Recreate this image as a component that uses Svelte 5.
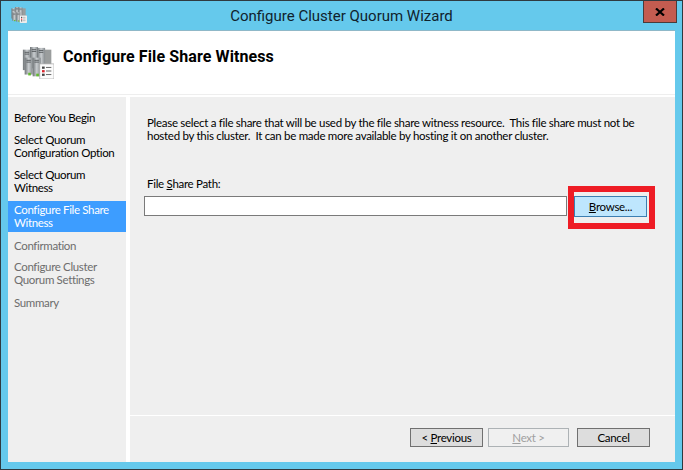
<script>
  const done = [
    { text: 'Before You Begin', cls: 'one' },
    { text: 'Select Quorum Configuration Option', cls: 'two' },
    { text: 'Select Quorum Witness', cls: 'three' }
  ];
  const todo = [
    { text: 'Confirmation', cls: 'five' },
    { text: 'Configure Cluster Quorum Settings', cls: 'six' },
    { text: 'Summary', cls: 'seven' }
  ];
</script>

{#snippet servers(size, box)}
  <svg width={size} height={size} viewBox="0 0 36 36" class={box}>
    <defs>
      <linearGradient id="g{size}" x1="0" x2="1" y1="0" y2="0">
        <stop offset="0" stop-color="#6f7477" />
        <stop offset=".5" stop-color="#c9cdd0" />
        <stop offset="1" stop-color="#858a8d" />
      </linearGradient>
    </defs>
    <rect x="24" y="3" width="9" height="20" fill="#9a9d9d" />
    <rect x="1" y="3" width="9" height="23" fill="url(#g{size})" />
    <rect x="9" y="0" width="9" height="24" fill="url(#g{size})" />
    <rect x="17" y="1" width="9" height="24" fill="url(#g{size})" />
    <rect x="3" y="12" width="9" height="19" fill="url(#g{size})" />
    <rect x="12" y="12" width="9" height="21" fill="url(#g{size})" />
    <path d="M3 6h5M3 8h5M11 3h5M11 5h5M19 4h5M19 6h5M5 15h5M5 17h5M14 15h5M14 17h5" stroke="#54585a" stroke-width="1" />
    <rect x="7" y="29" width="3" height="3" fill="#63b931" />
    <rect x="16" y="30" width="3" height="3" fill="#63b931" />
    <rect x="20" y="19" width="16" height="17" fill="#fbfbfb" stroke="#a9a9a9" stroke-width=".8" />
    <rect x="22.500" y="22" width="3" height="2.500" fill="#444" />
    <rect x="22.500" y="26" width="3" height="2.500" fill="#d8222a" />
    <rect x="22.500" y="30" width="3" height="2.500" fill="#444" />
    <path d="M27 23h6M27 27h6M27 31h6" stroke="#555" stroke-width="1" />
  </svg>
{/snippet}

<div class="window">
  <div class="titlebar">
    {@render servers(16, 'appicon')}
    <span class="title">Configure Cluster Quorum Wizard</span>
    <div class="close">
      <svg width="10" height="8" viewBox="0 0 10 8"><path d="M1 .5 9 7.500M9 .5 1 7.500" stroke="#000" stroke-width="2.200" /></svg>
    </div>
  </div>

  <div class="client">
    <header class="banner">
      {@render servers(32, 'bigicon')}
      <h1>Configure File Share Witness</h1>
    </header>

    <div class="body">
      <nav class="steps">
        {#each done as step}
          <div class="step {step.cls}">{step.text}</div>
        {/each}
        <div class="step current">Configure File Share Witness</div>
        {#each todo as step}
          <div class="step off {step.cls}">{step.text}</div>
        {/each}
      </nav>

      <main class="pane">
        <div class="content">
          <p class="intro">Please select a file share that will be used by the file share witness resource.&nbsp; This file share must not be<br />hosted by this cluster.&nbsp; It can be made more available by hosting it on another cluster.</p>
          <label class="lbl" for="path">File <u>S</u>hare Path:</label>
          <div class="pathrow">
            <input id="path" class="path" type="text" />
            <div class="highlight">
              <button class="browse"><u>B</u>rowse...</button>
            </div>
          </div>
        </div>
        <footer class="foot">
          <button class="btn"><span class="lt">&lt;</span> <u>P</u>revious</button>
          <button class="btn disabled"><u>N</u>ext &gt;</button>
          <button class="btn cancel">Cancel</button>
        </footer>
      </main>
    </div>
  </div>
</div>

<style>
  :global(body) {
    margin: 0;
    background: #65c9ec;
  }
  .window {
    box-sizing: border-box;
    width: 683px;
    height: 470px;
    background: #65c9ec;
    border: 1px solid #2f3a40;
    display: flex;
    flex-direction: column;
    padding: 0 7px 7px 7px;
    font-family: Lato, Roboto, sans-serif;
    font-size: 11.5px;
    letter-spacing: -0.29px;
    color: #000;
  }
  .titlebar {
    height: 29px;
    margin: 0 -7px;
    position: relative;
    display: flex;
    align-items: center;
    justify-content: center;
    flex: none;
  }
  .appicon {
    position: absolute;
    left: 10px;
    top: 6px;
  }
  .title {
    font-family: Roboto, sans-serif;
    font-size: 15px;
    letter-spacing: 0;
    color: #10222c;
    margin-top: 1px;
  }
  .close {
    position: absolute;
    right: 5px;
    top: 0;
    width: 32px;
    height: 21px;
    background: #c35c50;
    border: 1px solid #4a3b3a;
    border-top: none;
    display: flex;
    align-items: center;
    justify-content: center;
  }
  .client {
    flex: 1;
    background: #fff;
    display: flex;
    flex-direction: column;
    border-top: 1px solid #8fb8c8;
  }
  .banner {
    height: 64px;
    flex: none;
    display: flex;
    align-items: flex-start;
    box-sizing: border-box;
    padding: 16px 0 0 14px;
    border-bottom: 1px solid #eee;
    margin-bottom: 2px;
  }
  .bigicon { flex: none; }
  h1 {
    margin: 0 0 0 9px;
    font-family: Roboto, sans-serif;
    font-size: 16px;
    letter-spacing: 0.1px;
    font-weight: 700;
    line-height: 19px;
  }
  .body {
    flex: 1;
    display: flex;
    gap: 4px;
    min-height: 0;
  }
  .steps {
    width: 118px;
    flex: none;
    background: #efefef;
    position: relative;
    display: flex;
    flex-direction: column;
    padding-top: 14px;
    box-sizing: border-box;
    letter-spacing: -0.35px;
  }
  .step {
    line-height: 13px;
    padding: 0 6px;
  }
  .two { margin-top: 9px; }
  .three { margin-top: 9px; }
  .current {
    background: #3d9dff;
    color: #fff;
    margin-top: 7px;
    padding: 2px 6px 3px 6px;
    height: 31px;
    box-sizing: border-box;
  }
  .off { color: #6d6d6d; }
  .five { margin-top: 7px; }
  .six { margin-top: 8px; }
  .seven { margin-top: 10px; }
  .pane {
    flex: 1;
    background: #efefef;
    display: flex;
    flex-direction: column;
  }
  .content {
    flex: 1;
    padding: 19px 0 0 14px;
    border-bottom: 1px solid #fff;
    min-height: 0;
  }
  .intro {
    margin: 0 0 0 3px;
    line-height: 13px;
  }
  .lbl {
    display: block;
    margin: 35px 0 0 3px;
    line-height: 13px;
  }
  .pathrow {
    display: flex;
    align-items: flex-start;
    margin-top: -4px;
  }
  .path {
    width: 423px;
    height: 20px;
    box-sizing: border-box;
    border: 1px solid #7a7a7a;
    background: #fff;
    margin: 10px 0 0 0;
    padding: 0;
  }
  .highlight {
    box-sizing: border-box;
    width: 87px;
    height: 43px;
    border: 6px solid #ee1c25;
    margin-left: 1px;
    padding: 4px 0 0 0;
  }
  button {
    font: inherit;
    letter-spacing: inherit;
    color: inherit;
    padding: 0;
    margin: 0;
    box-sizing: border-box;
  }
  .browse {
    display: block;
    width: 73px;
    height: 21px;
    background: #bee6fd;
    border: 1px solid #3c7fb1;
  }
  .foot {
    height: 46px;
    flex: none;
    display: flex;
    padding: 12px 0 0 280px;
    box-sizing: border-box;
  }
  .btn {
    width: 73px;
    height: 19px;
    line-height: 15px;
    background: #dddddd;
    border: 1px solid #707070;
  }
  .disabled {
    width: 81px;
    margin-left: 5px;
    background: #f0f0f0;
    border-color: #adb2b5;
    color: #a0a0a0;
  }
  .cancel { margin-left: 8px; }
</style>
